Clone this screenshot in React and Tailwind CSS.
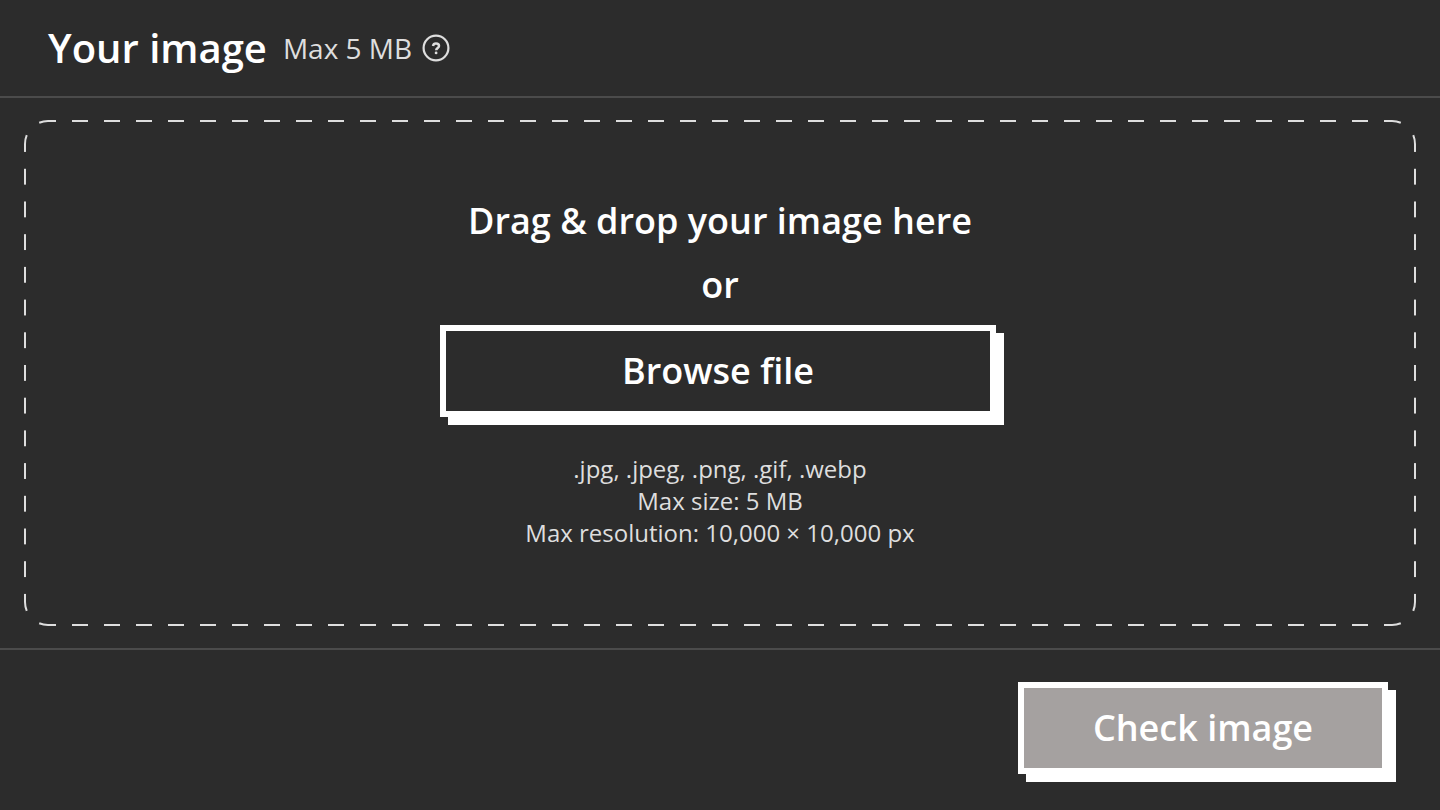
import { useRef, useState } from "react"

const corners = [
  "top-0 left-0",
  "top-0 right-0 rotate-90",
  "right-0 bottom-0 rotate-180",
  "bottom-0 left-0 -rotate-90",
]

// Long dashes that stretch to fit each side, like a rounded dashed border
function DashedFrame() {
  return (
    <div aria-hidden="true" className="pointer-events-none absolute inset-0">
      <div className="absolute inset-x-6 top-0 h-0.5 bg-[linear-gradient(90deg,#dedede_25%,transparent_25%_75%,#dedede_75%)] bg-[length:32px_2px] bg-repeat-round" />
      <div className="absolute inset-x-6 bottom-0 h-0.5 bg-[linear-gradient(90deg,#dedede_25%,transparent_25%_75%,#dedede_75%)] bg-[length:32px_2px] bg-repeat-round" />
      <div className="absolute inset-y-6 left-0 w-0.5 bg-[linear-gradient(180deg,#dedede_25%,transparent_25%_75%,#dedede_75%)] bg-[length:2px_32px] bg-repeat-round" />
      <div className="absolute inset-y-6 right-0 w-0.5 bg-[linear-gradient(180deg,#dedede_25%,transparent_25%_75%,#dedede_75%)] bg-[length:2px_32px] bg-repeat-round" />
      {corners.map((corner) => (
        <svg
          key={corner}
          viewBox="0 0 24 24"
          fill="none"
          stroke="#dedede"
          strokeWidth="2"
          className={`absolute size-6 ${corner}`}
        >
          <path d="M1 24A23 23 0 0 1 2.75 15.2M15.2 2.75A23 23 0 0 1 24 1" />
        </svg>
      ))}
    </div>
  )
}

function HelpIcon() {
  return (
    <svg viewBox="0 0 28 28" fill="none" stroke="currentColor" className="size-7">
      <circle cx="14" cy="14" r="12.4" strokeWidth="2.2" />
      <path d="M11 11.9C11.3 10.4 12.4 9.5 14 9.5C15.8 9.5 17 10.5 17 12C17 13.9 14.2 14 14.2 16.2" strokeWidth="2.5" />
      <circle cx="14.1" cy="18.9" r="1.4" fill="currentColor" stroke="none" />
    </svg>
  )
}

export default function App() {
  const inputRef = useRef(null)
  const [file, setFile] = useState(null)

  const handleDrop = (e) => {
    e.preventDefault()
    setFile(e.dataTransfer.files[0] ?? null)
  }

  return (
    <div className="flex min-h-screen flex-col bg-[#2c2c2c] font-['Open_Sans',sans-serif] text-white">
      {/* Header */}
      <header className="flex items-center border-b-2 border-[#4b4b4b] px-12 py-6">
        <h1 className="text-[40px] leading-12 font-semibold">Your image</h1>
        <p className="ml-4 text-[28px] leading-12 text-[#dedede]">Max 5 MB</p>
        <button type="button" aria-label="Image requirements" className="ml-2.5 text-[#dedede]">
          <HelpIcon />
        </button>
      </header>

      {/* Drop zone */}
      <main className="flex flex-1 flex-col px-6 py-[22px]">
        <div
          onDragOver={(e) => e.preventDefault()}
          onDrop={handleDrop}
          className="relative flex flex-1 flex-col items-center justify-center px-6 text-center"
        >
          <DashedFrame />
          <p className="text-4xl leading-12 font-semibold">Drag &amp; drop your image here</p>
          <p className="mt-4 text-4xl leading-12 font-semibold">or</p>
          <div className="mt-4 w-full max-w-[560px] pr-1">
            <button
              type="button"
              onClick={() => inputRef.current?.click()}
              className="w-full border-6 border-white bg-[#2c2c2c] py-4 text-4xl leading-12 font-semibold shadow-[8px_8px_0_#fff]"
            >
              Browse file
            </button>
            <input
              ref={inputRef}
              type="file"
              accept=".jpg,.jpeg,.png,.gif,.webp"
              aria-label="Image file"
              onChange={(e) => setFile(e.target.files[0] ?? null)}
              className="hidden"
            />
          </div>
          <p className="mt-9 text-2xl leading-8 text-[#dedede]">
            .jpg, .jpeg, .png, .gif, .webp
            <br />
            Max size: 5 MB
            <br />
            Max resolution: 10,000 × 10,000 px
          </p>
        </div>
      </main>

      {/* Footer */}
      <footer className="flex justify-end border-t-2 border-[#4b4b4b] pt-8 pr-13 pb-9 pl-6">
        <button
          type="button"
          disabled={!file}
          className="w-[370px] border-6 border-white bg-[#a5a1a0] py-4 text-4xl leading-12 font-semibold shadow-[8px_8px_0_#fff]"
        >
          Check image
        </button>
      </footer>
    </div>
  )
}
